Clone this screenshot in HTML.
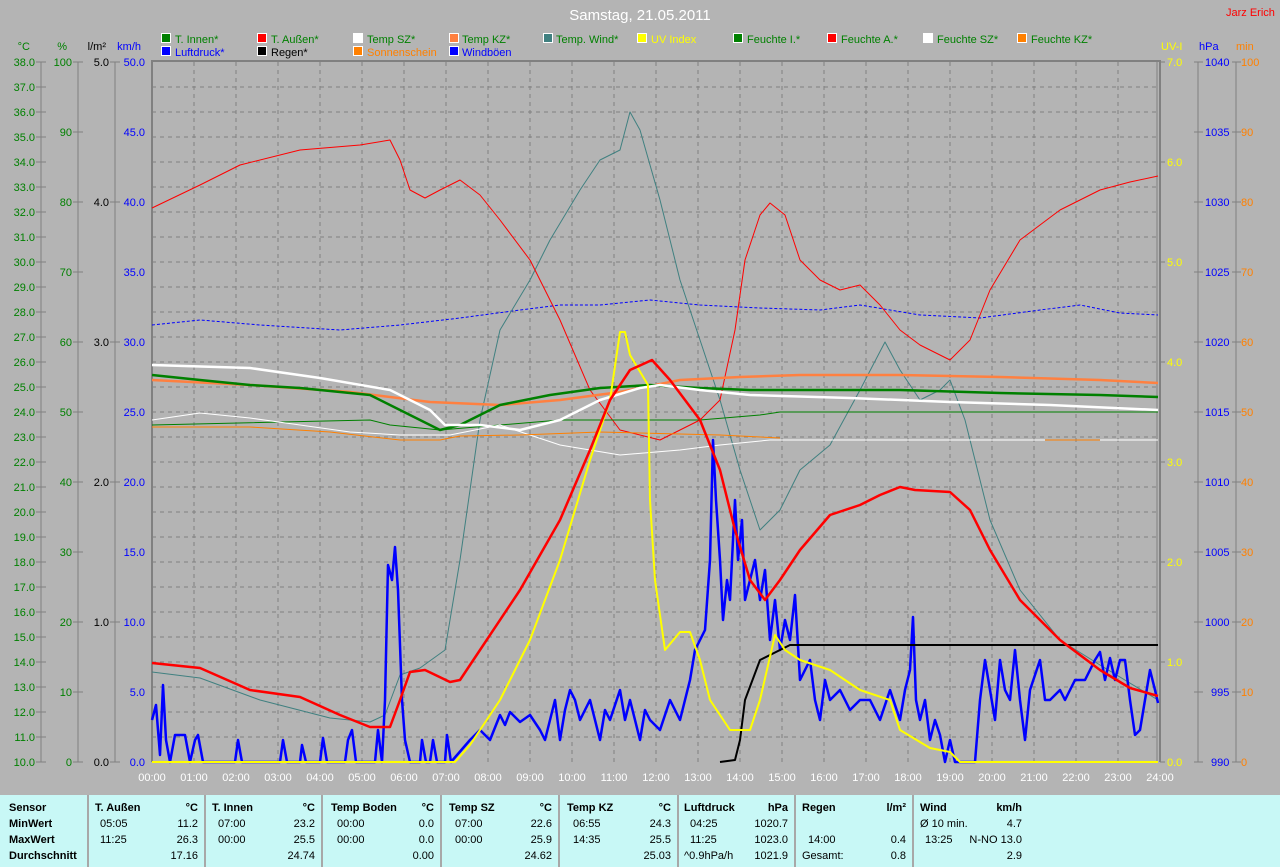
<!DOCTYPE html>
<html><head><meta charset="utf-8"><style>
body{margin:0;width:1280px;height:867px;background:#b4b4b4;overflow:hidden;font-family:"Liberation Sans",sans-serif;}
svg{position:absolute;left:0;top:0}
svg text{font-family:"Liberation Sans",sans-serif;font-size:11px}
#tbl{position:absolute;left:0;top:795px;width:1280px;height:72px;background:#c8f8f6;font-size:11px;color:#000}
#tbl div{position:absolute;white-space:nowrap}
.b{font-weight:bold}
.v{border-left:2px solid #a8a8a8;top:0;height:72px;width:0}
</style></head><body>
<svg width="1280" height="795" viewBox="0 0 1280 795">
<g stroke="#808080" stroke-width="1" stroke-dasharray="4,4" shape-rendering="crispEdges">
<line x1="194" y1="62" x2="194" y2="762"/><line x1="236" y1="62" x2="236" y2="762"/><line x1="278" y1="62" x2="278" y2="762"/><line x1="320" y1="62" x2="320" y2="762"/><line x1="362" y1="62" x2="362" y2="762"/><line x1="404" y1="62" x2="404" y2="762"/><line x1="446" y1="62" x2="446" y2="762"/><line x1="488" y1="62" x2="488" y2="762"/><line x1="530" y1="62" x2="530" y2="762"/><line x1="572" y1="62" x2="572" y2="762"/><line x1="614" y1="62" x2="614" y2="762"/><line x1="656" y1="62" x2="656" y2="762"/><line x1="698" y1="62" x2="698" y2="762"/><line x1="740" y1="62" x2="740" y2="762"/><line x1="782" y1="62" x2="782" y2="762"/><line x1="824" y1="62" x2="824" y2="762"/><line x1="866" y1="62" x2="866" y2="762"/><line x1="908" y1="62" x2="908" y2="762"/><line x1="950" y1="62" x2="950" y2="762"/><line x1="992" y1="62" x2="992" y2="762"/><line x1="1034" y1="62" x2="1034" y2="762"/><line x1="1076" y1="62" x2="1076" y2="762"/><line x1="1118" y1="62" x2="1118" y2="762"/>
<line x1="152" y1="87" x2="1158" y2="87"/><line x1="152" y1="112" x2="1158" y2="112"/><line x1="152" y1="137" x2="1158" y2="137"/><line x1="152" y1="162" x2="1158" y2="162"/><line x1="152" y1="187" x2="1158" y2="187"/><line x1="152" y1="212" x2="1158" y2="212"/><line x1="152" y1="237" x2="1158" y2="237"/><line x1="152" y1="262" x2="1158" y2="262"/><line x1="152" y1="287" x2="1158" y2="287"/><line x1="152" y1="312" x2="1158" y2="312"/><line x1="152" y1="337" x2="1158" y2="337"/><line x1="152" y1="362" x2="1158" y2="362"/><line x1="152" y1="387" x2="1158" y2="387"/><line x1="152" y1="412" x2="1158" y2="412"/><line x1="152" y1="437" x2="1158" y2="437"/><line x1="152" y1="462" x2="1158" y2="462"/><line x1="152" y1="487" x2="1158" y2="487"/><line x1="152" y1="512" x2="1158" y2="512"/><line x1="152" y1="537" x2="1158" y2="537"/><line x1="152" y1="562" x2="1158" y2="562"/><line x1="152" y1="587" x2="1158" y2="587"/><line x1="152" y1="612" x2="1158" y2="612"/><line x1="152" y1="637" x2="1158" y2="637"/><line x1="152" y1="662" x2="1158" y2="662"/><line x1="152" y1="687" x2="1158" y2="687"/><line x1="152" y1="712" x2="1158" y2="712"/><line x1="152" y1="737" x2="1158" y2="737"/>
</g>
<g stroke="#808080" stroke-width="2" fill="none" shape-rendering="crispEdges">
<polyline points="152,762 152,61 1160,61 1160,762"/>
</g>
<g stroke="#808080" stroke-width="1" shape-rendering="crispEdges">
<line x1="41" y1="62" x2="41" y2="762"/><line x1="78" y1="62" x2="78" y2="762"/><line x1="115" y1="62" x2="115" y2="762"/><line x1="1157" y1="62" x2="1157" y2="762"/><line x1="1198" y1="62" x2="1198" y2="762"/><line x1="1236" y1="62" x2="1236" y2="762"/>
<line x1="36" y1="62" x2="46" y2="62"/><line x1="36" y1="87" x2="46" y2="87"/><line x1="36" y1="112" x2="46" y2="112"/><line x1="36" y1="137" x2="46" y2="137"/><line x1="36" y1="162" x2="46" y2="162"/><line x1="36" y1="187" x2="46" y2="187"/><line x1="36" y1="212" x2="46" y2="212"/><line x1="36" y1="237" x2="46" y2="237"/><line x1="36" y1="262" x2="46" y2="262"/><line x1="36" y1="287" x2="46" y2="287"/><line x1="36" y1="312" x2="46" y2="312"/><line x1="36" y1="337" x2="46" y2="337"/><line x1="36" y1="362" x2="46" y2="362"/><line x1="36" y1="387" x2="46" y2="387"/><line x1="36" y1="412" x2="46" y2="412"/><line x1="36" y1="437" x2="46" y2="437"/><line x1="36" y1="462" x2="46" y2="462"/><line x1="36" y1="487" x2="46" y2="487"/><line x1="36" y1="512" x2="46" y2="512"/><line x1="36" y1="537" x2="46" y2="537"/><line x1="36" y1="562" x2="46" y2="562"/><line x1="36" y1="587" x2="46" y2="587"/><line x1="36" y1="612" x2="46" y2="612"/><line x1="36" y1="637" x2="46" y2="637"/><line x1="36" y1="662" x2="46" y2="662"/><line x1="36" y1="687" x2="46" y2="687"/><line x1="36" y1="712" x2="46" y2="712"/><line x1="36" y1="737" x2="46" y2="737"/><line x1="36" y1="762" x2="46" y2="762"/>
<line x1="73" y1="62" x2="83" y2="62"/><line x1="73" y1="132" x2="83" y2="132"/><line x1="73" y1="202" x2="83" y2="202"/><line x1="73" y1="272" x2="83" y2="272"/><line x1="73" y1="342" x2="83" y2="342"/><line x1="73" y1="412" x2="83" y2="412"/><line x1="73" y1="482" x2="83" y2="482"/><line x1="73" y1="552" x2="83" y2="552"/><line x1="73" y1="622" x2="83" y2="622"/><line x1="73" y1="692" x2="83" y2="692"/><line x1="73" y1="762" x2="83" y2="762"/>
<line x1="110" y1="62" x2="120" y2="62"/><line x1="110" y1="202" x2="120" y2="202"/><line x1="110" y1="342" x2="120" y2="342"/><line x1="110" y1="482" x2="120" y2="482"/><line x1="110" y1="622" x2="120" y2="622"/><line x1="110" y1="762" x2="120" y2="762"/>
<line x1="1160" y1="62" x2="1165" y2="62"/><line x1="1160" y1="162" x2="1165" y2="162"/><line x1="1160" y1="262" x2="1165" y2="262"/><line x1="1160" y1="362" x2="1165" y2="362"/><line x1="1160" y1="462" x2="1165" y2="462"/><line x1="1160" y1="562" x2="1165" y2="562"/><line x1="1160" y1="662" x2="1165" y2="662"/><line x1="1160" y1="762" x2="1165" y2="762"/>
<line x1="1194" y1="62" x2="1203" y2="62"/><line x1="1194" y1="132" x2="1203" y2="132"/><line x1="1194" y1="202" x2="1203" y2="202"/><line x1="1194" y1="272" x2="1203" y2="272"/><line x1="1194" y1="342" x2="1203" y2="342"/><line x1="1194" y1="412" x2="1203" y2="412"/><line x1="1194" y1="482" x2="1203" y2="482"/><line x1="1194" y1="552" x2="1203" y2="552"/><line x1="1194" y1="622" x2="1203" y2="622"/><line x1="1194" y1="692" x2="1203" y2="692"/><line x1="1194" y1="762" x2="1203" y2="762"/>
<line x1="1232" y1="62" x2="1241" y2="62"/><line x1="1232" y1="132" x2="1241" y2="132"/><line x1="1232" y1="202" x2="1241" y2="202"/><line x1="1232" y1="272" x2="1241" y2="272"/><line x1="1232" y1="342" x2="1241" y2="342"/><line x1="1232" y1="412" x2="1241" y2="412"/><line x1="1232" y1="482" x2="1241" y2="482"/><line x1="1232" y1="552" x2="1241" y2="552"/><line x1="1232" y1="622" x2="1241" y2="622"/><line x1="1232" y1="692" x2="1241" y2="692"/><line x1="1232" y1="762" x2="1241" y2="762"/>
</g>
<g fill="#008000" text-anchor="end">
<text x="35" y="66">38.0</text><text x="35" y="91">37.0</text><text x="35" y="116">36.0</text><text x="35" y="141">35.0</text><text x="35" y="166">34.0</text><text x="35" y="191">33.0</text><text x="35" y="216">32.0</text><text x="35" y="241">31.0</text><text x="35" y="266">30.0</text><text x="35" y="291">29.0</text><text x="35" y="316">28.0</text><text x="35" y="341">27.0</text><text x="35" y="366">26.0</text><text x="35" y="391">25.0</text><text x="35" y="416">24.0</text><text x="35" y="441">23.0</text><text x="35" y="466">22.0</text><text x="35" y="491">21.0</text><text x="35" y="516">20.0</text><text x="35" y="541">19.0</text><text x="35" y="566">18.0</text><text x="35" y="591">17.0</text><text x="35" y="616">16.0</text><text x="35" y="641">15.0</text><text x="35" y="666">14.0</text><text x="35" y="691">13.0</text><text x="35" y="716">12.0</text><text x="35" y="741">11.0</text><text x="35" y="766">10.0</text>
<text x="72" y="66">100</text><text x="72" y="136">90</text><text x="72" y="206">80</text><text x="72" y="276">70</text><text x="72" y="346">60</text><text x="72" y="416">50</text><text x="72" y="486">40</text><text x="72" y="556">30</text><text x="72" y="626">20</text><text x="72" y="696">10</text><text x="72" y="766">0</text>
<text x="30" y="50">°C</text><text x="67" y="50">%</text>
</g>
<g fill="#000" text-anchor="end">
<text x="109" y="66">5.0</text><text x="109" y="206">4.0</text><text x="109" y="346">3.0</text><text x="109" y="486">2.0</text><text x="109" y="626">1.0</text><text x="109" y="766">0.0</text>
<text x="106" y="50">l/m²</text>
</g>
<g fill="#0000ff" text-anchor="end">
<text x="145" y="66">50.0</text><text x="145" y="136">45.0</text><text x="145" y="206">40.0</text><text x="145" y="276">35.0</text><text x="145" y="346">30.0</text><text x="145" y="416">25.0</text><text x="145" y="486">20.0</text><text x="145" y="556">15.0</text><text x="145" y="626">10.0</text><text x="145" y="696">5.0</text><text x="145" y="766">0.0</text>
<text x="141" y="50">km/h</text>
</g>
<g fill="#ffff00"><text x="1167" y="66">7.0</text><text x="1167" y="166">6.0</text><text x="1167" y="266">5.0</text><text x="1167" y="366">4.0</text><text x="1167" y="466">3.0</text><text x="1167" y="566">2.0</text><text x="1167" y="666">1.0</text><text x="1167" y="766">0.0</text><text x="1161" y="50">UV-I</text></g>
<g fill="#0000ff"><text x="1205" y="66">1040</text><text x="1205" y="136">1035</text><text x="1205" y="206">1030</text><text x="1205" y="276">1025</text><text x="1205" y="346">1020</text><text x="1205" y="416">1015</text><text x="1205" y="486">1010</text><text x="1205" y="556">1005</text><text x="1205" y="626">1000</text><text x="1211" y="696">995</text><text x="1211" y="766">990</text><text x="1199" y="50">hPa</text></g>
<g fill="#ff8000"><text x="1241" y="66">100</text><text x="1241" y="136">90</text><text x="1241" y="206">80</text><text x="1241" y="276">70</text><text x="1241" y="346">60</text><text x="1241" y="416">50</text><text x="1241" y="486">40</text><text x="1241" y="556">30</text><text x="1241" y="626">20</text><text x="1241" y="696">10</text><text x="1241" y="766">0</text><text x="1236" y="50">min</text></g>
<g fill="#fff" text-anchor="middle">
<text x="152" y="781">00:00</text><text x="194" y="781">01:00</text><text x="236" y="781">02:00</text><text x="278" y="781">03:00</text><text x="320" y="781">04:00</text><text x="362" y="781">05:00</text><text x="404" y="781">06:00</text><text x="446" y="781">07:00</text><text x="488" y="781">08:00</text><text x="530" y="781">09:00</text><text x="572" y="781">10:00</text><text x="614" y="781">11:00</text><text x="656" y="781">12:00</text><text x="698" y="781">13:00</text><text x="740" y="781">14:00</text><text x="782" y="781">15:00</text><text x="824" y="781">16:00</text><text x="866" y="781">17:00</text><text x="908" y="781">18:00</text><text x="950" y="781">19:00</text><text x="992" y="781">20:00</text><text x="1034" y="781">21:00</text><text x="1076" y="781">22:00</text><text x="1118" y="781">23:00</text><text x="1160" y="781">24:00</text>
<text x="640" y="20" style="font-size:15px">Samstag, 21.05.2011</text>
</g>
<text x="1226" y="16" fill="#ff0000">Jarz Erich</text>
<g stroke="#fff" stroke-width="1" shape-rendering="crispEdges">
<rect x="161.5" y="33.5" width="9" height="9" fill="#008000"/><rect x="257.5" y="33.5" width="9" height="9" fill="#ff0000"/><rect x="353.5" y="33.5" width="9" height="9" fill="#ffffff"/><rect x="449.5" y="33.5" width="9" height="9" fill="#ff8040"/><rect x="543.5" y="33.5" width="9" height="9" fill="#408080"/><rect x="637.5" y="33.5" width="9" height="9" fill="#ffff00"/><rect x="733.5" y="33.5" width="9" height="9" fill="#008000"/><rect x="827.5" y="33.5" width="9" height="9" fill="#ff0000"/><rect x="923.5" y="33.5" width="9" height="9" fill="#ffffff"/><rect x="1017.5" y="33.5" width="9" height="9" fill="#ff8000"/>
<rect x="161.5" y="46.5" width="9" height="9" fill="#0000ff"/><rect x="257.5" y="46.5" width="9" height="9" fill="#000"/><rect x="353.5" y="46.5" width="9" height="9" fill="#ff8000"/><rect x="449.5" y="46.5" width="9" height="9" fill="#0000ff"/>
</g>
<g>
<text x="175" y="43" fill="#008000">T. Innen*</text><text x="271" y="43" fill="#008000">T. Außen*</text><text x="367" y="43" fill="#008000">Temp SZ*</text><text x="462" y="43" fill="#008000">Temp KZ*</text><text x="556" y="43" fill="#008000">Temp. Wind*</text><text x="651" y="43" fill="#ffff00">UV Index</text><text x="747" y="43" fill="#008000">Feuchte I.*</text><text x="841" y="43" fill="#008000">Feuchte A.*</text><text x="937" y="43" fill="#008000">Feuchte SZ*</text><text x="1031" y="43" fill="#008000">Feuchte KZ*</text>
<text x="175" y="56" fill="#0000ff">Luftdruck*</text><text x="271" y="56" fill="#000">Regen*</text><text x="367" y="56" fill="#ff8000">Sonnenschein</text><text x="462" y="56" fill="#0000ff">Windböen</text>
</g>
<g fill="none" stroke-linejoin="round">
<polyline stroke="#0000ff" stroke-width="1" stroke-dasharray="3,2" points="152,325 200,320 260,325 340,330 400,325 460,318 520,310 560,305 600,305 650,300 700,305 760,308 820,310 860,305 920,315 980,318 1040,310 1080,305 1120,313 1158,315"/>
<polyline stroke="#408080" stroke-width="1" points="152,672 200,678 260,700 330,718 370,722 385,715 400,675 420,668 445,650 460,560 480,420 500,330 530,280 550,240 580,190 600,160 620,150 630,112 640,130 660,200 680,280 700,340 720,400 740,470 760,530 780,510 800,470 830,445 860,390 885,342 900,370 920,400 940,390 950,380 965,420 990,520 1020,590 1060,640 1100,665 1158,700"/>
<polyline stroke="#ff0000" stroke-width="1" points="152,208 200,185 240,165 300,150 360,145 390,140 400,160 410,190 425,198 440,190 460,180 480,195 500,220 530,260 560,320 590,390 620,430 660,440 700,420 720,400 735,330 745,260 760,215 770,203 785,215 800,260 820,280 840,290 860,285 880,305 900,330 920,345 950,360 970,340 990,290 1020,240 1060,210 1100,190 1130,182 1158,176"/>
<polyline stroke="#008000" stroke-width="1" points="152,425 370,420 390,425 440,430 560,420 700,420 760,415 780,412 1158,412"/>
<polyline stroke="#ffffff" stroke-width="1" points="152,420 200,413 250,418 300,425 350,432 400,435 450,435 500,425 560,445 620,455 680,450 720,445 770,440 1158,440"/>
<polyline stroke="#ff8000" stroke-width="1" points="152,427 250,427 330,432 400,440 440,440 460,436 520,435 600,432 640,433 720,435 780,438"/>
<polyline stroke="#ff8000" stroke-width="1" points="1045,440 1100,440"/>
<polyline stroke="#ff8040" stroke-width="2.5" points="152,380 250,385 350,392 430,402 500,405 560,400 620,392 680,380 740,377 800,375 900,375 1000,377 1100,380 1158,383"/>
<polyline stroke="#008000" stroke-width="2.5" points="152,375 200,380 250,385 300,388 370,395 400,410 440,430 460,425 500,405 550,395 600,388 650,385 700,388 750,390 800,390 900,390 1000,393 1100,395 1158,397"/>
<polyline stroke="#ffffff" stroke-width="2.5" points="152,365 250,368 320,378 390,390 430,410 445,425 480,425 520,430 560,420 600,400 640,388 660,385 700,390 750,395 850,398 950,402 1050,405 1158,410"/>
<polyline stroke="#0000ff" stroke-width="2.5" points="152,720 156,705 160,755 163,685 166,740 170,762 175,735 185,735 190,762 195,740 198,735 203,762 235,762 238,740 242,762 280,762 283,740 287,762 300,762 302,745 306,762 320,762 323,738 327,762 345,762 348,740 352,730 356,762 375,762 378,730 382,762 385,700 388,565 392,580 395,547 398,590 402,700 405,740 410,762 420,762 422,740 426,762 430,762 433,740 437,762 445,762 447,735 451,762 470,740 480,730 490,740 500,715 505,725 510,712 520,722 530,715 540,730 545,740 550,720 555,700 560,740 565,710 570,690 575,700 580,720 590,700 600,740 605,710 610,720 620,690 625,720 630,700 640,740 645,710 650,720 660,730 670,700 680,720 690,680 695,650 700,640 705,630 710,560 713,440 716,500 720,560 723,620 727,580 730,600 735,500 738,560 742,520 745,600 750,580 755,560 760,600 765,570 770,640 775,600 780,650 785,620 790,640 795,595 800,680 810,660 815,700 820,720 825,680 830,700 840,690 850,710 860,700 870,700 880,720 890,690 900,720 905,690 910,670 913,617 916,700 920,720 925,700 930,740 935,720 940,735 945,762 950,740 955,762 975,762 980,700 985,660 990,690 995,720 1000,660 1005,690 1010,700 1015,650 1020,700 1025,740 1030,690 1040,660 1045,700 1050,700 1060,690 1065,700 1075,680 1085,680 1090,670 1095,660 1100,652 1105,680 1110,658 1115,680 1120,660 1125,660 1130,700 1135,735 1140,730 1145,700 1150,670 1155,690 1158,703"/>
<polyline stroke="#000" stroke-width="2" points="720,762 735,760 740,740 745,700 760,660 790,645 1158,645"/>
<polyline stroke="#ffff00" stroke-width="2" points="152,762 455,762 470,745 500,700 530,640 560,560 590,460 610,400 620,332 625,332 630,355 645,380 648,385 650,500 655,580 665,650 680,632 690,632 700,660 710,700 730,730 750,730 760,700 775,635 785,650 800,660 830,670 860,690 890,700 900,730 930,748 950,752 960,762 1158,762"/>
<polyline stroke="#ff0000" stroke-width="2.5" points="152,663 200,668 250,690 300,697 340,715 370,727 390,727 400,700 410,672 425,670 450,682 460,680 480,650 520,590 560,520 590,450 610,400 630,370 652,360 670,380 700,420 720,470 735,530 750,580 765,600 780,580 800,550 830,515 860,505 880,495 900,487 915,490 950,492 970,510 990,550 1020,600 1060,640 1100,670 1130,688 1158,696"/>
</g>
</svg>
<div id="tbl">
<div class="v" style="left:87px"></div><div class="v" style="left:204px"></div><div class="v" style="left:321px"></div><div class="v" style="left:440px"></div><div class="v" style="left:558px"></div><div class="v" style="left:677px"></div><div class="v" style="left:794px"></div><div class="v" style="left:912px"></div>
<div class="b" style="left:9px;top:7px">Sensor</div><div class="b" style="left:9px;top:23px">MinWert</div><div class="b" style="left:9px;top:39px">MaxWert</div><div class="b" style="left:9px;top:55px">Durchschnitt</div>

<div class="b" style="left:95px;top:7px">T. Außen</div><div class="b" style="right:1082px;top:7px">°C</div>
<div style="left:100px;top:23px">05:05</div><div style="right:1082px;top:23px">11.2</div>
<div style="left:100px;top:39px">11:25</div><div style="right:1082px;top:39px">26.3</div>
<div style="right:1082px;top:55px">17.16</div>

<div class="b" style="left:212px;top:7px">T. Innen</div><div class="b" style="right:965px;top:7px">°C</div>
<div style="left:218px;top:23px">07:00</div><div style="right:965px;top:23px">23.2</div>
<div style="left:218px;top:39px">00:00</div><div style="right:965px;top:39px">25.5</div>
<div style="right:965px;top:55px">24.74</div>

<div class="b" style="left:331px;top:7px">Temp Boden</div><div class="b" style="right:846px;top:7px">°C</div>
<div style="left:337px;top:23px">00:00</div><div style="right:846px;top:23px">0.0</div>
<div style="left:337px;top:39px">00:00</div><div style="right:846px;top:39px">0.0</div>
<div style="right:846px;top:55px">0.00</div>

<div class="b" style="left:449px;top:7px">Temp SZ</div><div class="b" style="right:728px;top:7px">°C</div>
<div style="left:455px;top:23px">07:00</div><div style="right:728px;top:23px">22.6</div>
<div style="left:455px;top:39px">00:00</div><div style="right:728px;top:39px">25.9</div>
<div style="right:728px;top:55px">24.62</div>

<div class="b" style="left:567px;top:7px">Temp KZ</div><div class="b" style="right:609px;top:7px">°C</div>
<div style="left:573px;top:23px">06:55</div><div style="right:609px;top:23px">24.3</div>
<div style="left:573px;top:39px">14:35</div><div style="right:609px;top:39px">25.5</div>
<div style="right:609px;top:55px">25.03</div>

<div class="b" style="left:684px;top:7px">Luftdruck</div><div class="b" style="right:492px;top:7px">hPa</div>
<div style="left:690px;top:23px">04:25</div><div style="right:492px;top:23px">1020.7</div>
<div style="left:690px;top:39px">11:25</div><div style="right:492px;top:39px">1023.0</div>
<div style="left:684px;top:55px">^0.9hPa/h</div><div style="right:492px;top:55px">1021.9</div>

<div class="b" style="left:802px;top:7px">Regen</div><div class="b" style="right:374px;top:7px">l/m²</div>
<div style="left:808px;top:39px">14:00</div><div style="right:374px;top:39px">0.4</div>
<div style="left:802px;top:55px">Gesamt:</div><div style="right:374px;top:55px">0.8</div>

<div class="b" style="left:920px;top:7px">Wind</div><div class="b" style="right:258px;top:7px">km/h</div>
<div style="left:920px;top:23px">Ø 10 min.</div><div style="right:258px;top:23px">4.7</div>
<div style="left:925px;top:39px">13:25</div><div style="right:258px;top:39px">N-NO 13.0</div>
<div style="right:258px;top:55px">2.9</div>
</div>
</body></html>
